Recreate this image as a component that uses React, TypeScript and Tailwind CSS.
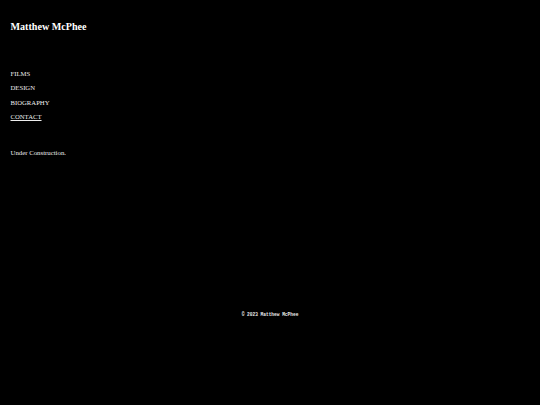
export default function App() {
    const links = ['FILMS', 'DESIGN', 'BIOGRAPHY', 'CONTACT']

    return (
        <div className="min-h-screen bg-black text-white font-['Liberation_Serif',serif]">
            <div className="pl-[10.5px] pt-[21px]">
                <h1 className="text-[10.1px] leading-[12px] font-bold">Matthew McPhee</h1>

                <nav className="mt-[34px] flex flex-col">
                    {links.map((link) => (
                        <a
                            key={link}
                            href="#"
                            className={`text-[6.7px] leading-[14.3px] text-[#eeeeee] ${link == 'CONTACT' ? 'underline' : ''}`}
                        >
                            {link}
                        </a>
                    ))}
                </nav>

                <p className="mt-[24px] text-[6.8px] leading-[10px] text-[#eeeeee]">Under Construction.</p>
            </div>

            <footer className="mt-[154px] text-center font-['Liberation_Mono',monospace] font-bold text-[4.5px] leading-[6px] text-[#eeeeee]">
                © 2023 Matthew McPhee
            </footer>
        </div>
    )
}
